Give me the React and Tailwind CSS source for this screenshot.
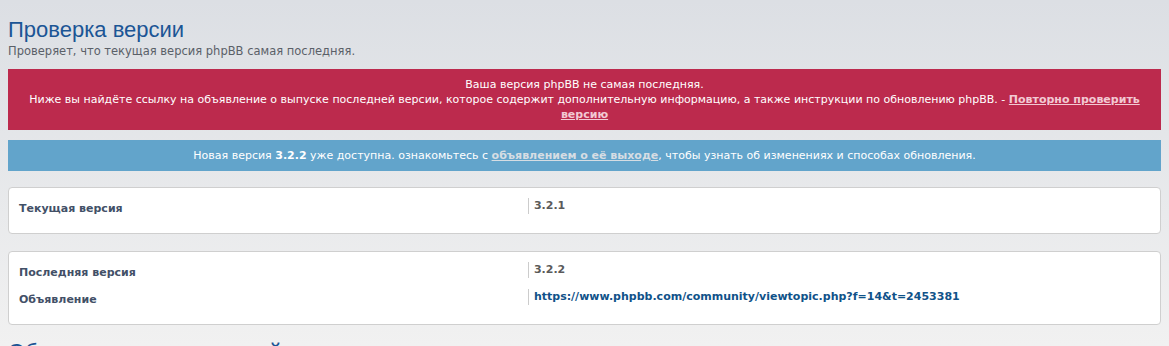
export default function App() {
  return (
    <div className="min-h-[346px] h-[346px] overflow-hidden bg-gradient-to-b from-[#dcdfe4] to-[#f1f1f1] px-2 pt-[16px] font-['DejaVu_Sans',Verdana,sans-serif] text-[11px] leading-[15px]">
      <h1 className="text-[22px] leading-[27px] text-[#1b5595] font-['Liberation_Sans',Arial,sans-serif]">
        Проверка версии
      </h1>
      <p className="mt-[1px] text-[11.5px] text-[#5a6068]">Проверяет, что текущая версия phpBB самая последняя.</p>

      {/* Warning */}
      <div className="mt-[10px] bg-[#bc2a4d] py-2 px-4 text-center text-white">
        <p>Ваша версия phpBB не самая последняя.</p>
        <p>
          Ниже вы найдёте ссылку на объявление о выпуске последней версии, которое содержит дополнительную
          информацию, а также инструкции по обновлению phpBB. -{" "}
          <a href="#" className="font-bold text-[#f2c9d3] underline">
            Повторно проверить версию
          </a>
        </p>
      </div>

      {/* Info */}
      <div className="mt-[10px] bg-[#62a4cb] py-2 px-4 text-center text-white">
        Новая версия <b>3.2.2</b> уже доступна. ознакомьтесь с{" "}
        <a href="#" className="font-bold text-[#d6dde3] underline">
          объявлением о её выходе
        </a>
        , чтобы узнать об изменениях и способах обновления.
      </div>

      {/* Current version */}
      <div className="mt-4 rounded-[4px] border border-[#cfcfcf] bg-white px-[10px] pt-[10px] pb-[8px]">
        <Row label="Текущая версия">
          <span className="font-bold text-[#5a5a5a]">3.2.1</span>
        </Row>
      </div>

      <div className="mt-[17px] rounded-[4px] border border-[#cfcfcf] bg-white px-[10px] pt-[10px] pb-[8px]">
        <Row label="Последняя версия">
          <span className="font-bold text-[#5a5a5a]">3.2.2</span>
        </Row>
        <Row label="Объявление">
          <a href="#" className="font-bold text-[#105289]">
            https://www.phpbb.com/community/viewtopic.php?f=14&amp;t=2453381
          </a>
        </Row>
      </div>

      <h1 className="mt-[13px] text-[22px] leading-[27px] text-[#1b5595] font-['Liberation_Sans',Arial,sans-serif]">
        Обновление до последней версии
      </h1>
    </div>
  );
}

function Row({ label, children }) {
  return (
    <div className="flex h-[27px]">
      <div className="w-[45%] pt-[3px] font-bold text-[#425067]">{label}</div>
      <div className="h-4 border-l border-[#cccccc] pl-[5px]">{children}</div>
    </div>
  );
}
